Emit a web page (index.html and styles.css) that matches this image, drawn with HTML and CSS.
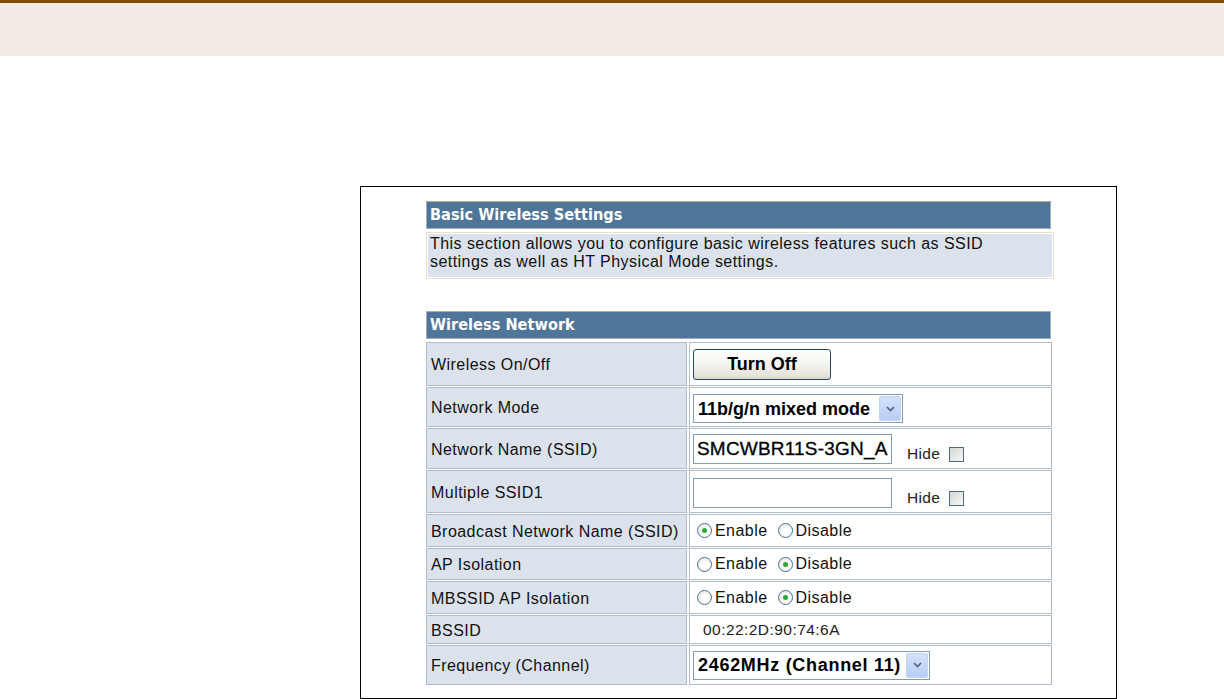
FILE: index.html
```html
<!DOCTYPE html>
<html>
<head>
<meta charset="utf-8">
<title>Basic Wireless Settings</title>
<link rel="stylesheet" href="styles.css">
</head>
<body>
<div class="topband"></div>
<div class="frame">
  <div class="section-head">Basic Wireless Settings</div>
  <div class="desc"><div class="desc-inner">This section allows you to configure basic wireless features such as SSID settings as well as HT Physical Mode settings.</div></div>

  <div class="section-head net-head">Wireless Network</div>
  <div class="grid">
    <div class="lbl">Wireless On/Off</div>
    <div class="val"><button class="btn" type="button">Turn Off</button></div>

    <div class="lbl">Network Mode</div>
    <div class="val val-sel">
      <div class="selbox mode">
        <select><option>11b/g/n mixed mode</option></select>
        <span class="arrow"><svg width="9" height="6" viewBox="0 0 9 6"><path d="M1 1 L4.5 4.5 L8 1" fill="none" stroke="#4d6185" stroke-width="1.6"/></svg></span>
      </div>
    </div>

    <div class="lbl">Network Name (SSID)</div>
    <div class="val val-input">
      <input class="txt" type="text" value="SMCWBR11S-3GN_A">
      <label class="hide">Hide <span class="chk"></span></label>
    </div>

    <div class="lbl">Multiple SSID1</div>
    <div class="val val-input">
      <input class="txt" type="text" value="">
      <label class="hide">Hide <span class="chk"></span></label>
    </div>

    <div class="lbl">Broadcast Network Name (SSID)</div>
    <div class="val radios">
      <span class="radio on"></span><span class="rtxt">Enable</span>
      <span class="radio"></span><span class="rtxt">Disable</span>
    </div>

    <div class="lbl">AP Isolation</div>
    <div class="val radios">
      <span class="radio"></span><span class="rtxt">Enable</span>
      <span class="radio on"></span><span class="rtxt">Disable</span>
    </div>

    <div class="lbl">MBSSID AP Isolation</div>
    <div class="val radios">
      <span class="radio"></span><span class="rtxt">Enable</span>
      <span class="radio on"></span><span class="rtxt">Disable</span>
    </div>

    <div class="lbl">BSSID</div>
    <div class="val bssid">00:22:2D:90:74:6A</div>

    <div class="lbl">Frequency (Channel)</div>
    <div class="val">
      <div class="selbox freq">
        <select class="sel-wide"><option>2462MHz (Channel 11)</option></select>
        <span class="arrow"><svg width="9" height="6" viewBox="0 0 9 6"><path d="M1 1 L4.5 4.5 L8 1" fill="none" stroke="#4d6185" stroke-width="1.6"/></svg></span>
      </div>
    </div>
  </div>
</div>
</body>
</html>
```

FILE: styles.css
```css
html, body {
  margin: 0;
  padding: 0;
  background: #ffffff;
}
body {
  font-family: "Liberation Sans", Arial, sans-serif;
  color: #000;
  overflow: hidden;
}
.topband {
  height: 53px;
  border-top: 3px solid #7f4f00;
  background: #f2ece5;
}
.frame {
  margin: 130px 0 0 360px;
  width: 690px;
  height: 497px;
  border: 1px solid #000;
  padding: 14px 0 0 65px;
}
.section-head {
  width: 620px;
  height: 26px;
  border: 1px solid #a2adb8;
  border-top-color: #b3aa98;
  background: #4f7598;
  color: #fff;
  font-family: "DejaVu Sans Condensed", "DejaVu Sans", sans-serif;
  font-weight: bold;
  font-size: 16.2px;
  line-height: 26px;
  padding-left: 3px;
}
.desc {
  margin-top: 3px;
  width: 624px;
  border: 1px solid #e7e0cd;
  padding: 1px;
  background: #fff;
}
.desc-inner {
  background: #dbe2ec;
  font-size: 16px;
  letter-spacing: 0.45px;
  line-height: 17.5px;
  padding: 1px 40px 7px 2px;
  color: #111;
}
.net-head {
  margin-top: 32px;
  margin-bottom: 3px;
}
.grid {
  display: grid;
  width: 626px;
  grid-template-columns: 261px 363px;
  grid-template-rows: 44px 40px 41px 43px 33px 32px 33px 29px 40px;
  column-gap: 2px;
  row-gap: 1px;
}
.lbl, .val {
  box-sizing: border-box;
  border: 1px solid #aebccc;
  display: flex;
  align-items: center;
  font-size: 16px;
  letter-spacing: 0.45px;
  color: #111;
}
.lbl {
  background: #dbe2ec;
  padding-left: 4px;
  padding-top: 2px;
}
.val {
  background: #fff;
  padding-left: 3px;
}
.btn {
  appearance: none;
  width: 138px;
  height: 31px;
  border: 1px solid #1f456f;
  border-radius: 3px;
  background: linear-gradient(#ffffff, #f4f3ee 50%, #e6e3da 90%, #d5d0c4);
  font-family: "Liberation Sans", Arial, sans-serif;
  font-weight: bold;
  font-size: 18px;
  color: #000;
  padding: 0;
  margin: 0;
}
.val-sel {
  align-items: flex-start;
  padding-top: 6px;
}
.selbox {
  display: flex;
  align-items: center;
  height: 27px;
  border: 1px solid #7f9db9;
  background: #fff;
}
.selbox.mode { width: 208px; }
.selbox.freq { width: 235px; }
.selbox select {
  appearance: none;
  -webkit-appearance: none;
  flex: 1;
  min-width: 0;
  border: none;
  background: transparent;
  font-family: "Liberation Sans", Arial, sans-serif;
  font-weight: bold;
  font-size: 18px;
  letter-spacing: 0;
  color: #000;
  padding: 0 0 0 4px;
  margin: 0;
  height: 27px;
  outline: none;
}
.selbox select.sel-wide {
  letter-spacing: 0.7px;
}
.arrow {
  width: 20px;
  height: 23px;
  margin-right: 1px;
  border: 1px solid #c4d4f4;
  border-radius: 2px;
  background: linear-gradient(#d3e0fb, #b9cdf6);
  display: flex;
  align-items: center;
  justify-content: center;
}
.val-input {
  align-items: flex-end;
  padding-bottom: 4px;
}
.txt {
  box-sizing: border-box;
  width: 199px;
  height: 30px;
  border: 1px solid #7f9db9;
  padding: 0 3px;
  margin: 0;
  font-family: "Liberation Sans", Arial, sans-serif;
  font-size: 19px;
  letter-spacing: 0.2px;
  -webkit-text-stroke: 0.3px #000;
  color: #000;
  outline: none;
}
.hide {
  display: flex;
  align-items: center;
  margin-left: 15px;
  margin-bottom: 2px;
  font-size: 15.5px;
  letter-spacing: 0.3px;
  line-height: 16px;
  color: #222;
  gap: 9px;
}
.chk {
  width: 13px;
  height: 13px;
  border: 1px solid #4a6a90;
  background: linear-gradient(135deg, #d8d8d0, #f6f6f3);
}
.radios {
  padding-left: 7px;
}
.radio {
  box-sizing: border-box;
  width: 15px;
  height: 15px;
  border-radius: 50%;
  border: 1px solid #4a6d96;
  background: radial-gradient(circle at 60% 60%, #ffffff 30%, #dcdcd4 100%);
  display: flex;
  align-items: center;
  justify-content: center;
  margin-right: 3px;
}
.radio.on::after {
  content: "";
  width: 5px;
  height: 5px;
  border-radius: 50%;
  background: #2fa82f;
}
.rtxt {
  margin-right: 10px;
}
.bssid {
  padding-left: 13px;
  font-size: 15.5px;
  color: #222;
}
```
